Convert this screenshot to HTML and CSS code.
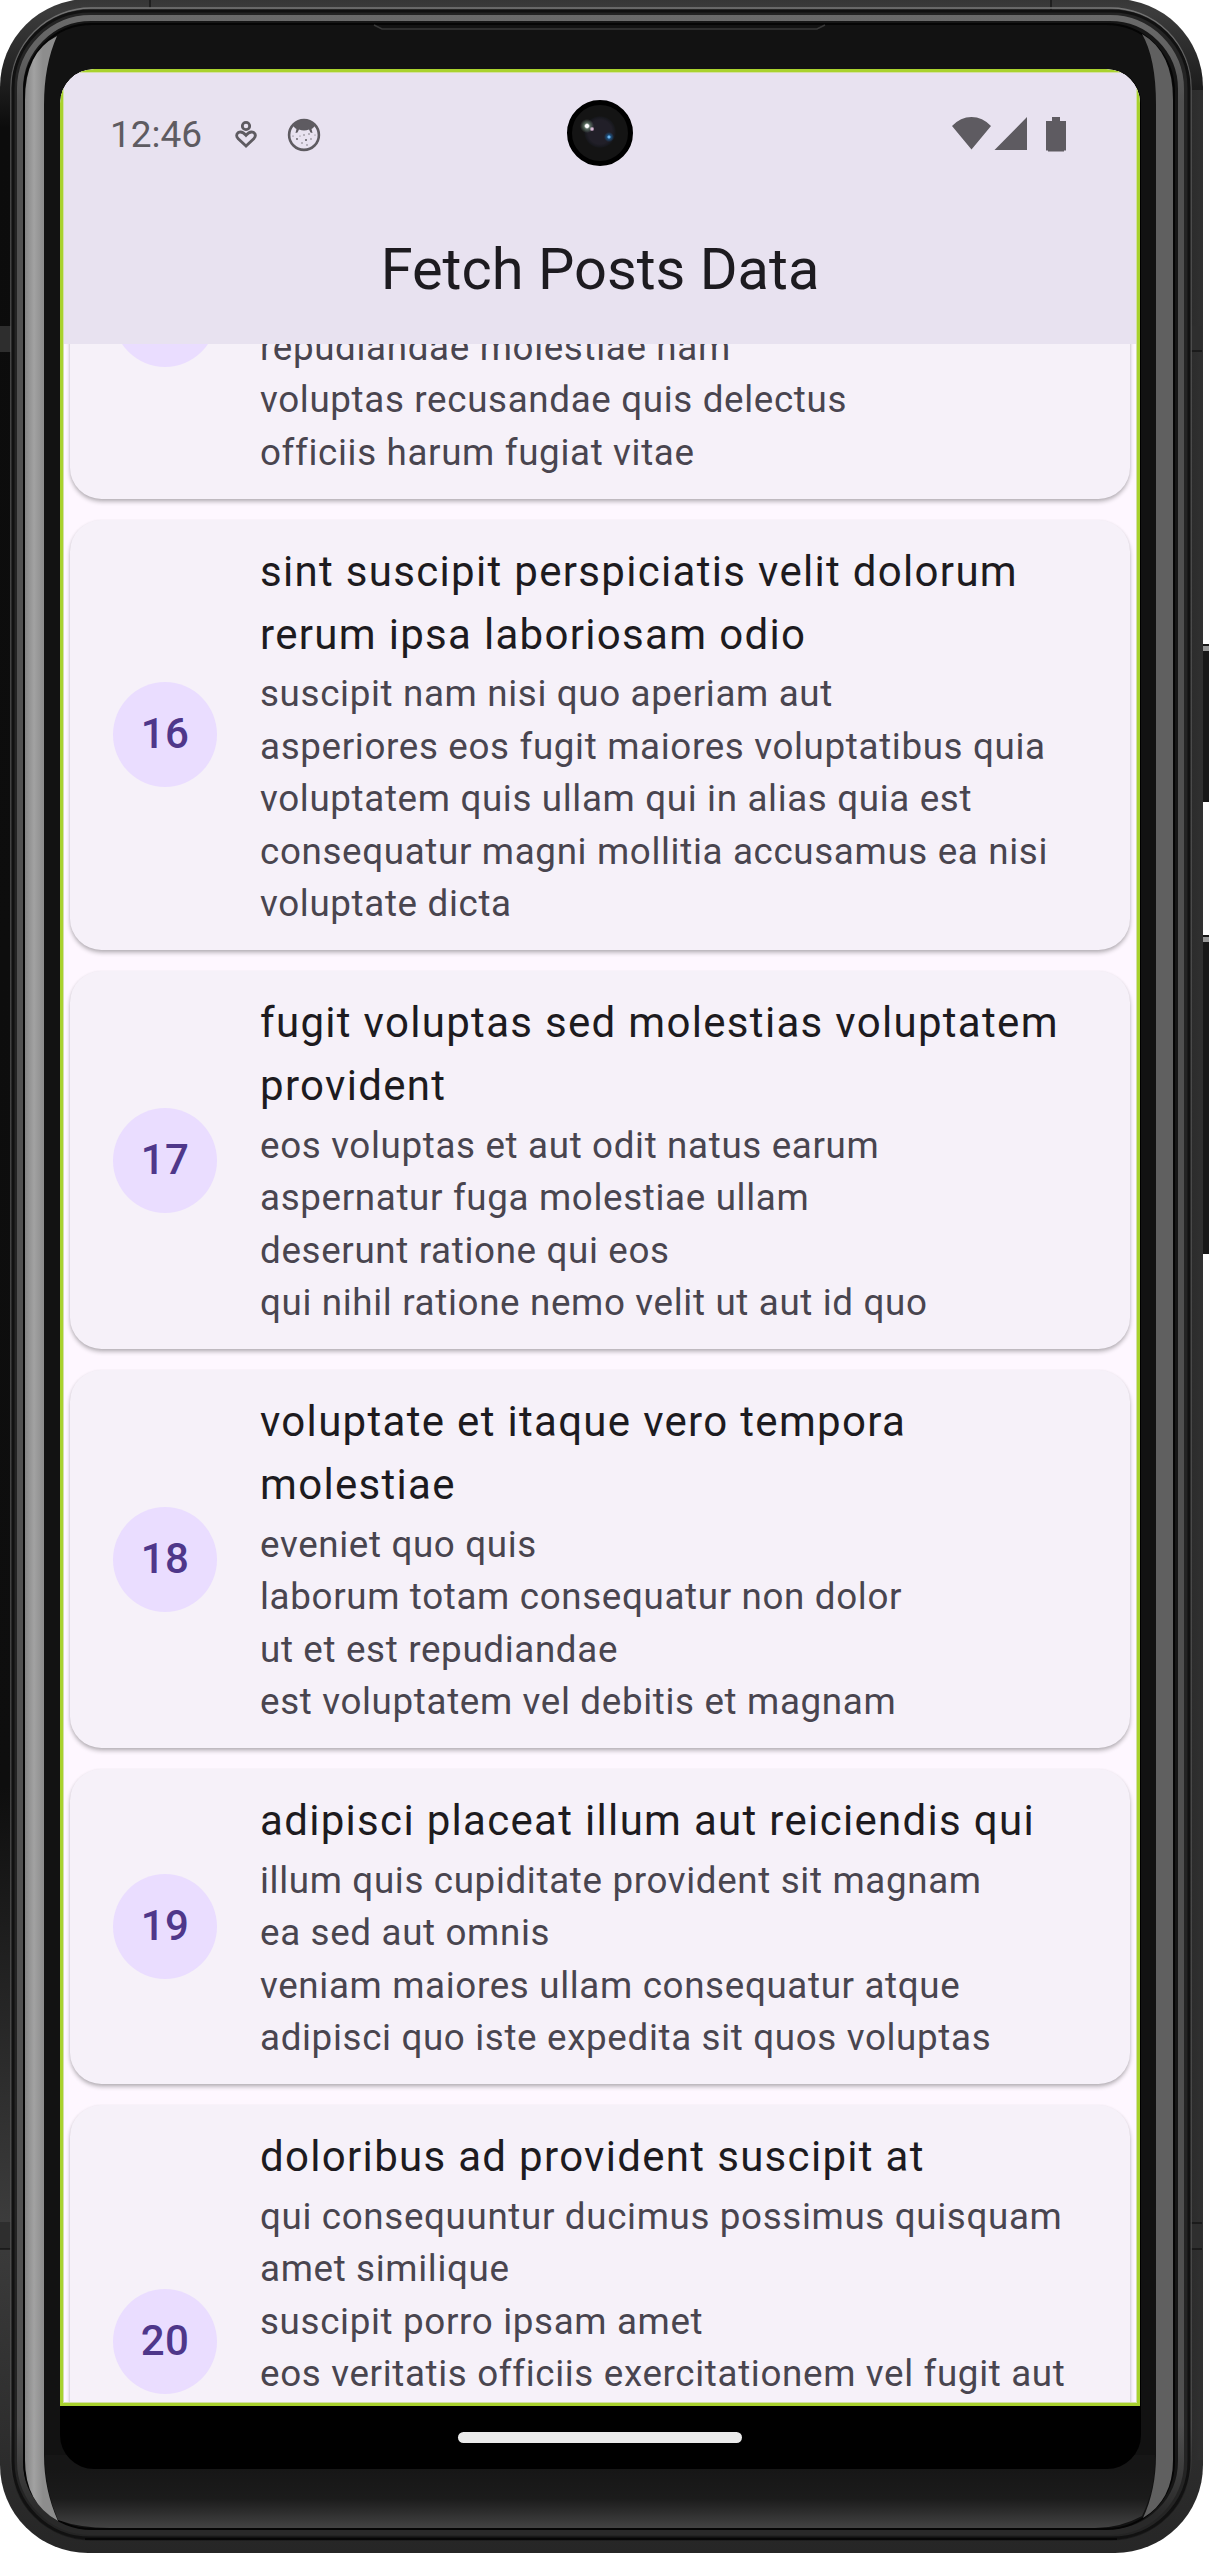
FILE: index.html
```html
<!DOCTYPE html>
<html lang="en">
<head>
<meta charset="utf-8">
<title>Fetch Posts Data</title>
<link rel="stylesheet" href="styles.css">
</head>
<body>
<div class="phone">
  <svg class="frame" width="1209" height="2553" viewBox="0 0 1209 2553" aria-hidden="true">
    <defs>
      <linearGradient id="edge" x1="0" y1="0" x2="0" y2="2553" gradientUnits="userSpaceOnUse">
        <stop offset="0" stop-color="#363636"/><stop offset=".004" stop-color="#3c3c3c"/><stop offset=".05" stop-color="#0c0c0c"/><stop offset=".7" stop-color="#0e0e0e"/><stop offset=".87" stop-color="#3c3c3c"/><stop offset="1" stop-color="#262626"/>
      </linearGradient>
      <linearGradient id="edgeRight" x1="1170" y1="0" x2="1203" y2="0" gradientUnits="userSpaceOnUse">
        <stop offset="0" stop-color="#222" stop-opacity="0"/><stop offset=".3" stop-color="#282828"/><stop offset="1" stop-color="#303030"/>
      </linearGradient>
      <linearGradient id="glintL" x1="25" y1="0" x2="43" y2="0" gradientUnits="userSpaceOnUse">
        <stop offset="0" stop-color="#858585"/><stop offset=".5" stop-color="#a2a2a2"/><stop offset="1" stop-color="#8d8d8d"/>
      </linearGradient>
      <linearGradient id="chin" x1="0" y1="2468" x2="0" y2="2529" gradientUnits="userSpaceOnUse">
        <stop offset="0" stop-color="#161616"/><stop offset=".5" stop-color="#1b1b1b"/><stop offset="1" stop-color="#444"/>
      </linearGradient>
      <linearGradient id="rimOuter" x1="0" y1="0" x2="0" y2="2553" gradientUnits="userSpaceOnUse">
        <stop offset="0" stop-color="#7a7a7a"/><stop offset=".03" stop-color="#555"/><stop offset=".95" stop-color="#505050"/><stop offset=".98" stop-color="#1c1c1c"/>
      </linearGradient>
      <linearGradient id="rimInner" x1="0" y1="0" x2="0" y2="2553" gradientUnits="userSpaceOnUse">
        <stop offset="0" stop-color="#6e6e6e"/><stop offset=".02" stop-color="#626262"/><stop offset=".04" stop-color="#505050"/><stop offset=".95" stop-color="#505050"/><stop offset=".985" stop-color="#292929"/>
      </linearGradient>
    </defs>
    <path fill="#181818" d="M1201 644h8v158h-8zM1201 935h8v319h-8z"/>
    <path fill="#999" d="M1203 646h6v5h-6zM1203 937h6v5h-6z"/>
    <rect x="0" y="-1" width="1203" height="2554" rx="88" fill="url(#edge)"/>
    <rect x="1100" y="90" width="103" height="2370" fill="url(#edgeRight)"/>
    <path fill="#2e2e2e" d="M0 326h11v26H0zM0 2222h11v27H0zM1190 326h12v25h-12zM1190 2223h12v26h-12z"/>
    <path fill="none" stroke="#090909" d="M150 0v8M1051 0v11M0 2249h11M1190 2223h12M1190 2249h12M1190 351h12"/>
    <rect x="11" y="8" width="1180" height="2532" rx="80" fill="none" stroke="url(#rimOuter)" stroke-width="1.5"/>
    <rect x="13" y="11" width="1176" height="2527" rx="77" fill="#242424" stroke="#111" stroke-width="3"/>
    <rect x="20" y="18" width="1161" height="2514" rx="71" fill="#161616" stroke="url(#rimInner)" stroke-width="6"/>
    <rect x="24" y="24" width="1150" height="2505" rx="68" fill="#121212" stroke="#050505" stroke-width="2"/>
    <path fill="url(#glintL)" d="M57 36Q25 52 25 100V2460Q25 2503 58 2521Q44 2490 44 2455V105Q44 65 57 36z"/>
    <path fill="#606060" d="M1142 34Q1173 52 1173 100V2460Q1173 2500 1143 2518Q1156 2490 1156 2455V105Q1156 58 1142 34z"/>
    <path fill="url(#chin)" d="M45 2455H1155Q1155 2490 1142 2516Q1120 2528 1095 2528H110Q80 2528 58 2520Q45 2490 45 2455z"/>
    <path fill="none" stroke="#383838" stroke-width="1.5" d="M374 25l8 4H817l8-4"/>
    <path fill="none" stroke="#060606" stroke-width="2" d="M85 2539H1117"/>
  </svg>

  <div class="display">
    <div class="screen">
      <header class="top-bar">
        <div class="status-bar">
          <span class="clock">12:46</span>
          <svg class="wellbeing" width="22" height="30" viewBox="0 0 22 30" fill="none" stroke="#5e5b61" stroke-width="2.8"><circle cx="11" cy="6" r="3.7"/><path d="M11 26L3 18.500Q.2 15 3.200 12.600Q7 10.500 11 15.300Q15 10.500 18.800 12.600Q21.800 15 19 18.500z"/></svg>
          <svg class="debug" width="34" height="34" viewBox="0 0 34 34"><circle cx="17" cy="17" r="14.900" fill="none" stroke="#5e5b61" stroke-width="2.600"/><path fill="#5e5b61" d="M5.500 7Q17-3 28.500 7Q26 10.500 24.500 11l1 4-2-.5-1.500-3Q17 13.500 12 11.500l-1.500 3-2 .5 1-4Q8 10.500 5.500 7z"/><g fill="#5e5b61"><circle cx="17" cy="17" r=".7"/><circle cx="22" cy="16" r=".7"/><circle cx="10" cy="21" r=".9"/><circle cx="19" cy="22" r="1"/><circle cx="24" cy="21" r=".7"/><circle cx="13" cy="18" r=".5"/><circle cx="15" cy="25" r=".7"/><circle cx="20" cy="27" r=".7"/><circle cx="28" cy="17" r=".5"/><circle cx="6" cy="18" r=".6"/></g></svg>
          <svg class="signals" width="115" height="35" viewBox="0 0 115 35" fill="#5e5b61"><path d="M0 9Q8.500 0 19.500 0T39 9L19.500 32.500zM42.500 33L75 0V33zM100 0h8v4h6v29.500h-2v1H96v-1h-2V4h6z"/></svg>
        </div>
        <h1 class="title">Fetch Posts Data</h1>
      </header>

      <main class="posts">
        <article class="card card-first">
          <div class="avatar"></div>
          <div class="text"><p class="body">repudiandae molestiae nam<br>voluptas recusandae quis delectus<br>officiis harum fugiat vitae</p></div>
        </article>
        <article class="card">
          <div class="avatar">16</div>
          <div class="text"><h2 class="heading">sint suscipit perspiciatis velit dolorum<br>rerum ipsa laboriosam odio</h2><p class="body">suscipit nam nisi quo aperiam aut<br>asperiores eos fugit maiores voluptatibus quia<br>voluptatem quis ullam qui in alias quia est<br>consequatur magni mollitia accusamus ea nisi<br>voluptate dicta</p></div>
        </article>
        <article class="card">
          <div class="avatar">17</div>
          <div class="text"><h2 class="heading">fugit voluptas sed molestias voluptatem<br>provident</h2><p class="body">eos voluptas et aut odit natus earum<br>aspernatur fuga molestiae ullam<br>deserunt ratione qui eos<br>qui nihil ratione nemo velit ut aut id quo</p></div>
        </article>
        <article class="card">
          <div class="avatar">18</div>
          <div class="text"><h2 class="heading">voluptate et itaque vero tempora<br>molestiae</h2><p class="body">eveniet quo quis<br>laborum totam consequatur non dolor<br>ut et est repudiandae<br>est voluptatem vel debitis et magnam</p></div>
        </article>
        <article class="card">
          <div class="avatar">19</div>
          <div class="text"><h2 class="heading">adipisci placeat illum aut reiciendis qui</h2><p class="body">illum quis cupiditate provident sit magnam<br>ea sed aut omnis<br>veniam maiores ullam consequatur atque<br>adipisci quo iste expedita sit quos voluptas</p></div>
        </article>
        <article class="card card-last">
          <div class="avatar">20</div>
          <div class="text"><h2 class="heading">doloribus ad provident suscipit at</h2><p class="body">qui consequuntur ducimus possimus quisquam<br>amet similique<br>suscipit porro ipsam amet<br>eos veritatis officiis exercitationem vel fugit aut</p></div>
        </article>
      </main>
    </div>
    <div class="nav-bar"><div class="handle"></div></div>
    <div class="camera"></div>
  </div>
</div>
</body>
</html>
```
FILE: styles.css
```css
* { box-sizing: border-box; margin: 0; }

body {
  background: #fff;
  font-family: Roboto, "Liberation Sans", sans-serif;
  overflow: hidden;
}

.phone {
  position: relative;
  width: 1209px;
  height: 2553px;
  padding: 69px 0 0 60px;
}

.frame { position: absolute; left: 0; top: 0; }

.display {
  position: relative;
  display: flex;
  flex-direction: column;
  width: 1081px;
  height: 2400px;
  border-radius: 34px;
  overflow: hidden;
  background: #000;
}

.screen {
  position: relative;
  display: flex;
  flex-direction: column;
  width: 1080px;
  height: 2337px;
  overflow: hidden;
  border-radius: 34px 34px 0 0;
  background: #fef7ff;
}

/* highlight ring drawn over the app's edges */
.screen::after {
  content: "";
  position: absolute;
  inset: 0;
  z-index: 2;
  border: 3px solid #a9d22e;
  box-shadow: inset 0 0 0 1px #d3e0a6;
}

.top-bar {
  position: relative;
  z-index: 1;
  flex: none;
  height: 275px;
  background: #e8e2f0;
}

.status-bar {
  display: flex;
  align-items: center;
  height: 131px;
  padding: 0 73px 0 50px;
  color: #5e5b61;
}

.clock { width: 93px; padding-top: 1px; font-size: 37px; line-height: 44px; }
.wellbeing { margin-left: 32px; }
.debug { margin-left: 30px; }
.signals { margin-left: auto; }

.title {
  padding-top: 33px;
  text-align: center;
  font-size: 57.75px;
  font-weight: 400;
  line-height: 73px;
  color: #1d1b20;
}

.posts {
  display: flex;
  flex-direction: column;
  gap: 21px;
  margin-top: -213px;
  padding: 0 10.5px 0 10px;
}

.card {
  flex: none;
  display: flex;
  align-items: center;
  gap: 43px;
  padding: 20px 42px 22px 43px;
  border-radius: 31.5px;
  background: #f6f1f9;
  box-shadow: 0 3px 4px rgba(0, 0, 0, .24), 0 1px 3px rgba(0, 0, 0, .08);
}

.card-first { height: 367.5px; }
.card-first .text { align-self: flex-end; }
.card-last { height: 472.5px; }
.card-last .text { align-self: flex-start; }

.avatar {
  display: flex;
  align-items: center;
  justify-content: center;
  flex: none;
  width: 104px;
  height: 105px;
  margin-top: 2px;
  padding-bottom: 2px;
  border-radius: 50%;
  background: #eaddff;
  color: #4f378a;
  font-size: 42px;
  font-weight: 500;
  letter-spacing: .4px;
}

.text { white-space: nowrap; }

.heading {
  font-size: 42px;
  font-weight: 400;
  line-height: 63px;
  letter-spacing: 1.3125px;
  color: #1d1b20;
}

.body {
  padding-top: 2.5px;
  margin-bottom: -2.5px;
  font-size: 36.75px;
  line-height: 52.5px;
  letter-spacing: .656px;
  color: #49454f;
}

.nav-bar {
  display: flex;
  flex: 1;
  align-items: center;
  justify-content: center;
  padding-right: 2px;
}

.handle { width: 284px; height: 11px; border-radius: 5.5px; background: #ebebeb; }

.camera {
  position: absolute;
  z-index: 3;
  left: 507px;
  top: 31px;
  width: 66px;
  height: 66px;
  border: 5px solid #000;
  border-radius: 50%;
  background:
    radial-gradient(circle at 15px 21px, #fff 0 1.5px, rgba(150, 190, 160, .5) 3px, transparent 7px),
    radial-gradient(circle at 20px 24px, #e2b8dd 0 1px, transparent 2.5px),
    radial-gradient(circle at 37px 32px, #69b5f0 0 1px, #1e4f7c 2px, transparent 5px),
    radial-gradient(circle at 28px 27px, #211f28 0 12px, #17181d 15px, #141414 16px) #000;
}
```
